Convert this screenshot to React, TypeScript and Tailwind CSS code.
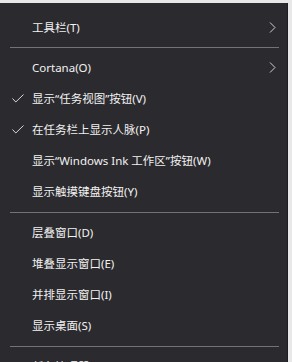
import React from 'react';

type Item =
  | { kind: 'item'; label: string; checked?: boolean; submenu?: boolean }
  | { kind: 'sep'; h: string };

const items: Item[] = [
  { kind: 'item', label: '工具栏(T)', submenu: true },
  { kind: 'sep', h: 'h-[9px]' },
  { kind: 'item', label: 'Cortana(O)', submenu: true },
  { kind: 'item', label: '显示“任务视图”按钮(V)', checked: true },
  { kind: 'item', label: '在任务栏上显示人脉(P)', checked: true },
  { kind: 'item', label: '显示“Windows Ink 工作区”按钮(W)' },
  { kind: 'item', label: '显示触摸键盘按钮(Y)' },
  { kind: 'sep', h: 'h-[10px]' },
  { kind: 'item', label: '层叠窗口(D)' },
  { kind: 'item', label: '堆叠显示窗口(E)' },
  { kind: 'item', label: '并排显示窗口(I)' },
  { kind: 'item', label: '显示桌面(S)' },
  { kind: 'sep', h: 'h-[10px]' },
  { kind: 'item', label: '任务管理器(K)' },
];

function Check() {
  return (
    <svg width="12" height="9" viewBox="0 0 12 9" fill="none">
      <path d="M0.5 4.5 L3.8 8 L11.5 0.5" stroke="#d8d8d8" strokeWidth="1" />
    </svg>
  );
}

function Chevron() {
  return (
    <svg width="7" height="11" viewBox="0 0 7 11" fill="none">
      <path d="M1 0.5 L6 5.5 L1 10.5" stroke="#cfcfcf" strokeWidth="1" />
    </svg>
  );
}

export default function App() {
  return (
    <div className="w-[292px] h-[362px] overflow-hidden bg-[#e8e8e8] flex items-start">
      <div
        className="mt-[3px] w-[288px] h-[400px] bg-[#2b2a2e] border-r border-[#1e1e20] pt-[9px] text-[#f2f2f2] text-[11.5px]"
        style={{ fontFamily: '"Noto Sans", "Noto Sans CJK SC", sans-serif' }}
      >
        {items.map((it, i) =>
          it.kind === 'sep' ? (
            <div key={i} className={`${it.h} flex items-center ml-[10px] mr-[8px]`}>
              <div className="h-px w-full bg-[#737373]" />
            </div>
          ) : (
            <div key={i} className="h-[31px] flex items-center">
              <div className="w-[32px] pl-[12px] flex items-center">{it.checked && <Check />}</div>
              <span className="flex-1 whitespace-nowrap leading-none">{it.label}</span>
              {it.submenu && (
                <div className="w-[18px] pr-[10px] flex items-center">
                  <Chevron />
                </div>
              )}
            </div>
          )
        )}
      </div>
    </div>
  );
}
